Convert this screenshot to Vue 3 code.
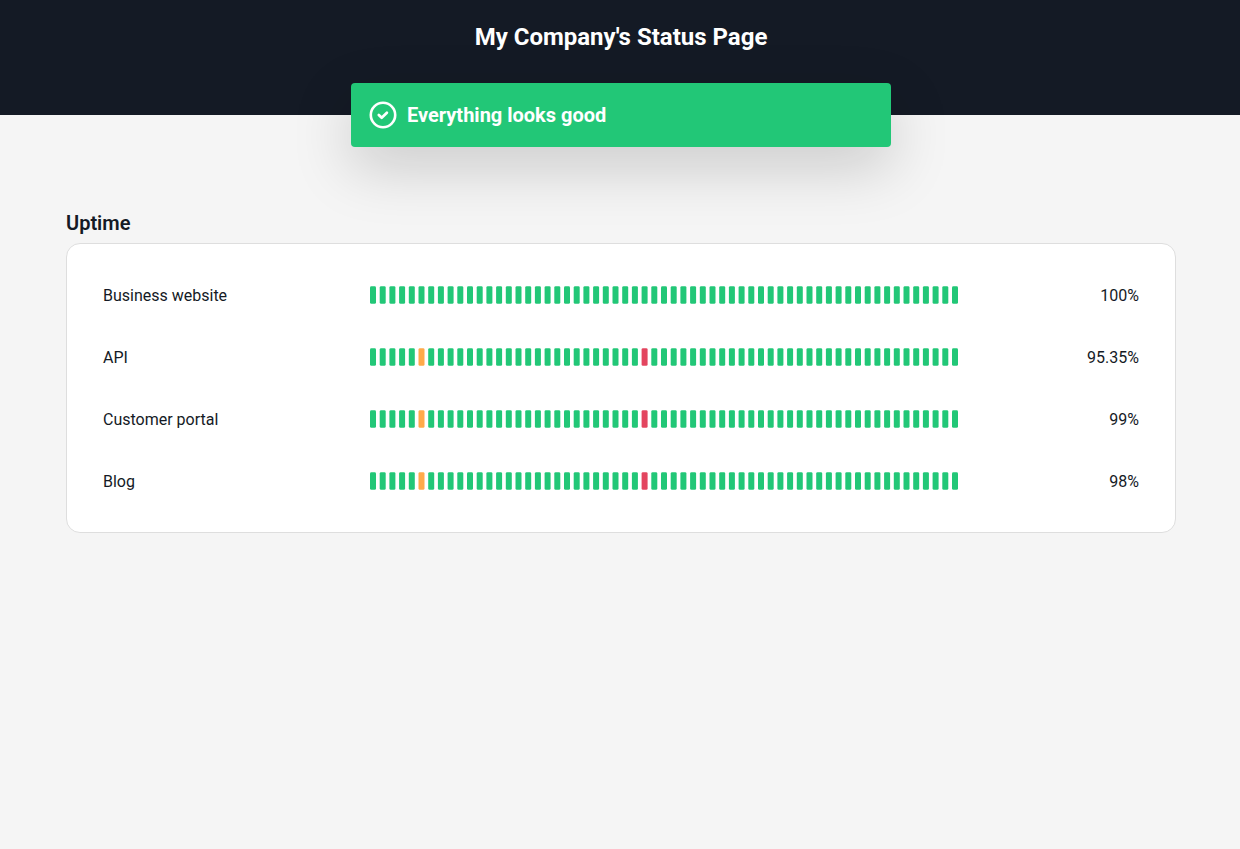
<script setup>
const BAR_COUNT = 61
const BAR_STEP = 97

const services = [
  { name: 'Business website', uptime: '100%', incidents: {} },
  { name: 'API', uptime: '95.35%', incidents: { 5: 'degraded', 28: 'down' } },
  { name: 'Customer portal', uptime: '99%', incidents: { 5: 'degraded', 28: 'down' } },
  { name: 'Blog', uptime: '98%', incidents: { 5: 'degraded', 28: 'down' } }
]
</script>

<template>
  <div class="page">
    <header class="header">
      <h1 class="title">My Company's Status Page</h1>
    </header>
    <div class="banner" role="status">
      <svg class="banner-icon" viewBox="0 0 28 28" fill="none" stroke="currentColor" aria-hidden="true">
        <circle cx="14" cy="14" r="12.2" stroke-width="2.6" />
        <path d="M9.8 14l2.9 2.8 5.2-5" stroke-width="2.7" stroke-linecap="round" stroke-linejoin="round" />
      </svg>
      <span>Everything looks good</span>
    </div>
    <main class="content">
      <h2 class="section-title">Uptime</h2>
      <ul class="card">
        <li v-for="service in services" :key="service.name" class="row">
          <span class="name">{{ service.name }}</span>
          <svg class="bars" viewBox="0 0 5880 180" aria-hidden="true">
            <rect
              v-for="n in BAR_COUNT"
              :key="n"
              :class="service.incidents[n - 1] || 'up'"
              :x="(n - 1) * BAR_STEP"
              y="2"
              width="60"
              height="176"
              rx="14"
            />
          </svg>
          <span class="uptime">{{ service.uptime }}</span>
        </li>
      </ul>
    </main>
  </div>
</template>

<style>
body {
  margin: 0;
  background: #f5f5f5;
}
</style>

<style scoped>
.page {
  font-family: Roboto, "Liberation Sans", sans-serif;
  color: #141a25;
}
.header {
  box-sizing: border-box;
  height: 115px;
  padding: 21px 0 0 2px;
  background: #141a25;
  color: #fff;
  text-align: center;
}
.title {
  margin: 0;
  font-size: 24px;
  line-height: 32px;
  font-weight: 700;
}
.banner {
  position: relative;
  left: 1px;
  box-sizing: border-box;
  display: flex;
  align-items: center;
  gap: 10px;
  max-width: 540px;
  height: 64px;
  margin: -32px auto 0;
  padding: 0 18px;
  border-radius: 4px;
  background: #22c777;
  color: #fff;
  font-size: 20px;
  line-height: 24px;
  font-weight: 700;
  box-shadow: 0 20px 60px rgba(0, 0, 0, 0.18);
}
.banner-icon {
  width: 28px;
  height: 28px;
  flex: none;
}
.content {
  padding: 64px 64px 0 66px;
}
.section-title {
  margin: 0 0 8px;
  font-size: 20px;
  line-height: 24px;
  font-weight: 600;
}
.card {
  margin: 0;
  padding: 20px 36px;
  border: 1px solid #dedede;
  border-radius: 14px;
  background: #fff;
  list-style: none;
}
.row {
  display: grid;
  grid-template-columns: 267px minmax(0, 588px) 1fr;
  align-items: center;
  height: 62px;
  font-size: 16px;
  line-height: 20px;
}
.name,
.uptime {
  padding-top: 2px;
}
.bars {
  display: block;
  width: 100%;
}
.up {
  fill: #22c777;
}
.degraded {
  fill: #ffaa4a;
}
.down {
  fill: #e3455f;
}
.uptime {
  text-align: right;
}
</style>
